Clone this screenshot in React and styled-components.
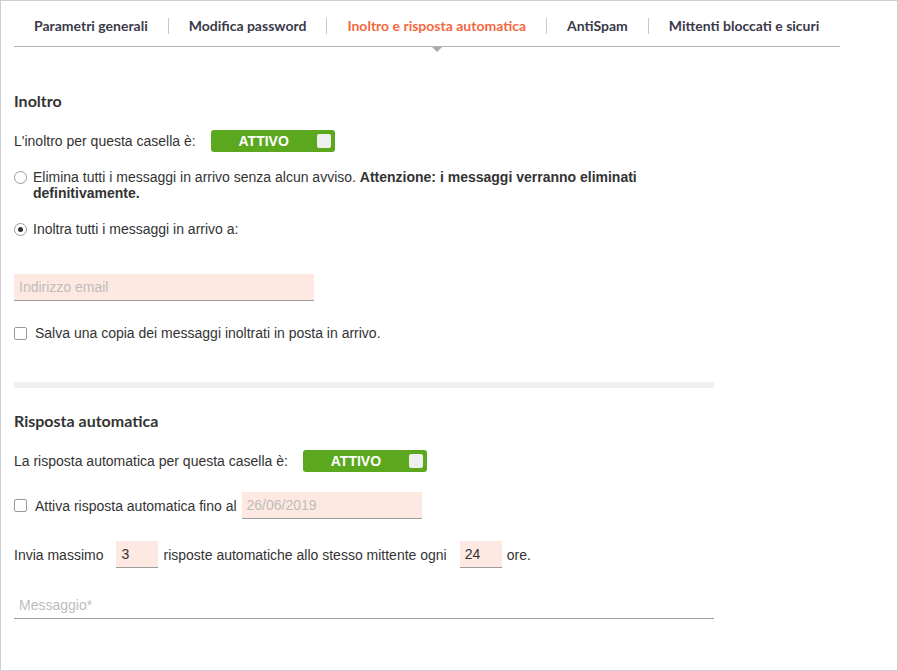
import React from "react";
import styled, { createGlobalStyle } from "styled-components";

const Global = createGlobalStyle`
  html, body { margin: 0; padding: 0; background: #fff; }
  body { font-family: "Liberation Sans", Arial, sans-serif; font-size: 14px; color: #333; }
  * { box-sizing: border-box; }
`;

const Frame = styled.div`
  width: 898px;
  height: 671px;
  border: 1px solid #cfcfcf;
  padding: 0 13px;
  overflow: hidden;
`;

const TabBar = styled.nav`
  width: 826px;
  display: flex;
  align-items: center;
  padding: 17px 0 12px;
  border-bottom: 1px solid #b5b5b5;
`;

const Tab = styled.div`
  position: relative;
  font-family: Lato, "Open Sans", sans-serif;
  font-weight: 700;
  font-size: 14px;
  line-height: 16px;
  padding: 0 20px 0 20px;
  color: ${(p) => (p.$active ? "#f4683f" : "#3a3a48")};
  white-space: nowrap;
  ${(p) =>
    p.$active &&
    `&::after {
      content: "";
      position: absolute;
      left: 50%;
      top: calc(100% + 13px);
      margin-left: -5px;
      border-left: 5px solid transparent;
      border-right: 5px solid transparent;
      border-top: 5px solid #aaa;
    }`}
`;

const TabSep = styled.span`
  width: 1px;
  height: 16px;
  background: #c8c8c8;
`;

const Section = styled.section`
  width: 700px;
  display: flex;
  flex-direction: column;
  align-items: flex-start;
`;

const Heading = styled.h2`
  margin: ${(p) => p.$mt}px 0 0;
  font-family: Lato, "Open Sans", sans-serif;
  font-weight: 700;
  font-size: 16px;
  line-height: 20px;
  color: #333;
`;

const Row = styled.div`
  display: flex;
  align-items: center;
  margin-top: ${(p) => p.$mt}px;
  line-height: 16px;
`;

const ToggleLabel = styled.span`
  margin-right: 15px;
`;

const Toggle = styled.div`
  width: 124px;
  height: 22px;
  border-radius: 3px;
  background: #5ba81f;
  display: flex;
  align-items: center;
  padding: 0 4px 0 0;
`;

const ToggleText = styled.span`
  flex: 1;
  text-align: center;
  color: #fff;
  font-weight: 700;
  font-size: 14px;
`;

const Knob = styled.span`
  width: 14px;
  height: 14px;
  border-radius: 2px;
  background: #efefef;
`;

const RadioRow = styled.div`
  display: flex;
  align-items: flex-start;
  margin-top: ${(p) => p.$mt}px;
  line-height: 16px;
  width: 660px;
`;

const RadioText = styled.p`
  margin: 0;
  flex: 1;
`;

const Radio = styled.span`
  flex: none;
  width: 13px;
  height: 13px;
  margin-top: 2px;
  margin-right: 6px;
  border-radius: 50%;
  border: 1px solid #9a9a9a;
  background: #fff;
  display: flex;
  align-items: center;
  justify-content: center;
  &::after {
    content: "";
    width: 5px;
    height: 5px;
    border-radius: 50%;
    background: ${(p) => (p.$checked ? "#333" : "transparent")};
  }
`;

const Check = styled.span`
  flex: none;
  width: 13px;
  height: 13px;
  margin-right: 8px;
  border-radius: 2px;
  border: 1px solid #9a9a9a;
  background: #fff;
`;

const Field = styled.div`
  width: ${(p) => p.$w}px;
  height: ${(p) => p.$h || 27}px;
  margin: ${(p) => p.$m || "0"};
  background: ${(p) => (p.$plain ? "transparent" : "#fde9e1")};
  border-bottom: 1px solid #9d9d9d;
  padding: 0 5px;
  display: flex;
  align-items: center;
  color: ${(p) => (p.$placeholder ? "#bdbdbd" : "#333")};
  font-size: 14px;
  flex: none;
`;

const FieldBlock = styled.div`
  margin-top: ${(p) => p.$mt}px;
`;

const Divider = styled.hr`
  width: 700px;
  height: 6px;
  margin: 41px 0 0;
  border: 0;
  background: #f0f0f0;
`;

const tabs = [
  "Parametri generali",
  "Modifica password",
  "Inoltro e risposta automatica",
  "AntiSpam",
  "Mittenti bloccati e sicuri",
];

export default function App() {
  return (
    <>
      <Global />
      <Frame>
        <TabBar>
          {tabs.map((t, i) => (
            <React.Fragment key={t}>
              {i > 0 && <TabSep />}
              <Tab $active={i === 2}>{t}</Tab>
            </React.Fragment>
          ))}
        </TabBar>

        <Section>
          <Heading $mt={44}>Inoltro</Heading>
          <Row $mt={19}>
            <ToggleLabel>L'inoltro per questa casella è:</ToggleLabel>
            <Toggle>
              <ToggleText>ATTIVO</ToggleText>
              <Knob />
            </Toggle>
          </Row>
          <RadioRow $mt={17}>
            <Radio />
            <RadioText>
              Elimina tutti i messaggi in arrivo senza alcun avviso.{" "}
              <b>Attenzione: i messaggi verranno eliminati</b>
              <br />
              <b>definitivamente.</b>
            </RadioText>
          </RadioRow>
          <RadioRow $mt={20}>
            <Radio $checked />
            <RadioText>Inoltra tutti i messaggi in arrivo a:</RadioText>
          </RadioRow>
          <FieldBlock $mt={37}>
            <Field $w={300} $placeholder>Indirizzo email</Field>
          </FieldBlock>
          <Row $mt={24}>
            <Check />
            <span>Salva una copia dei messaggi inoltrati in posta in arrivo.</span>
          </Row>
        </Section>

        <Divider />

        <Section>
          <Heading $mt={23}>Risposta automatica</Heading>
          <Row $mt={19}>
            <ToggleLabel>La risposta automatica per questa casella è:</ToggleLabel>
            <Toggle>
              <ToggleText>ATTIVO</ToggleText>
              <Knob />
            </Toggle>
          </Row>
          <Row $mt={20}>
            <Check />
            <span>Attiva risposta automatica fino al</span>
            <Field $w={180} $m="0 0 0 5px" $placeholder>26/06/2019</Field>
          </Row>
          <Row $mt={22}>
            <span>Invia massimo</span>
            <Field $w={42} $m="0 5px 0 13px">3</Field>
            <span>risposte automatiche allo stesso mittente ogni</span>
            <Field $w={42} $m="0 5px 0 13px">24</Field>
            <span>ore.</span>
          </Row>
          <FieldBlock $mt={24}>
            <Field $w={700} $plain $placeholder>Messaggio*</Field>
          </FieldBlock>
        </Section>
      </Frame>
    </>
  );
}
